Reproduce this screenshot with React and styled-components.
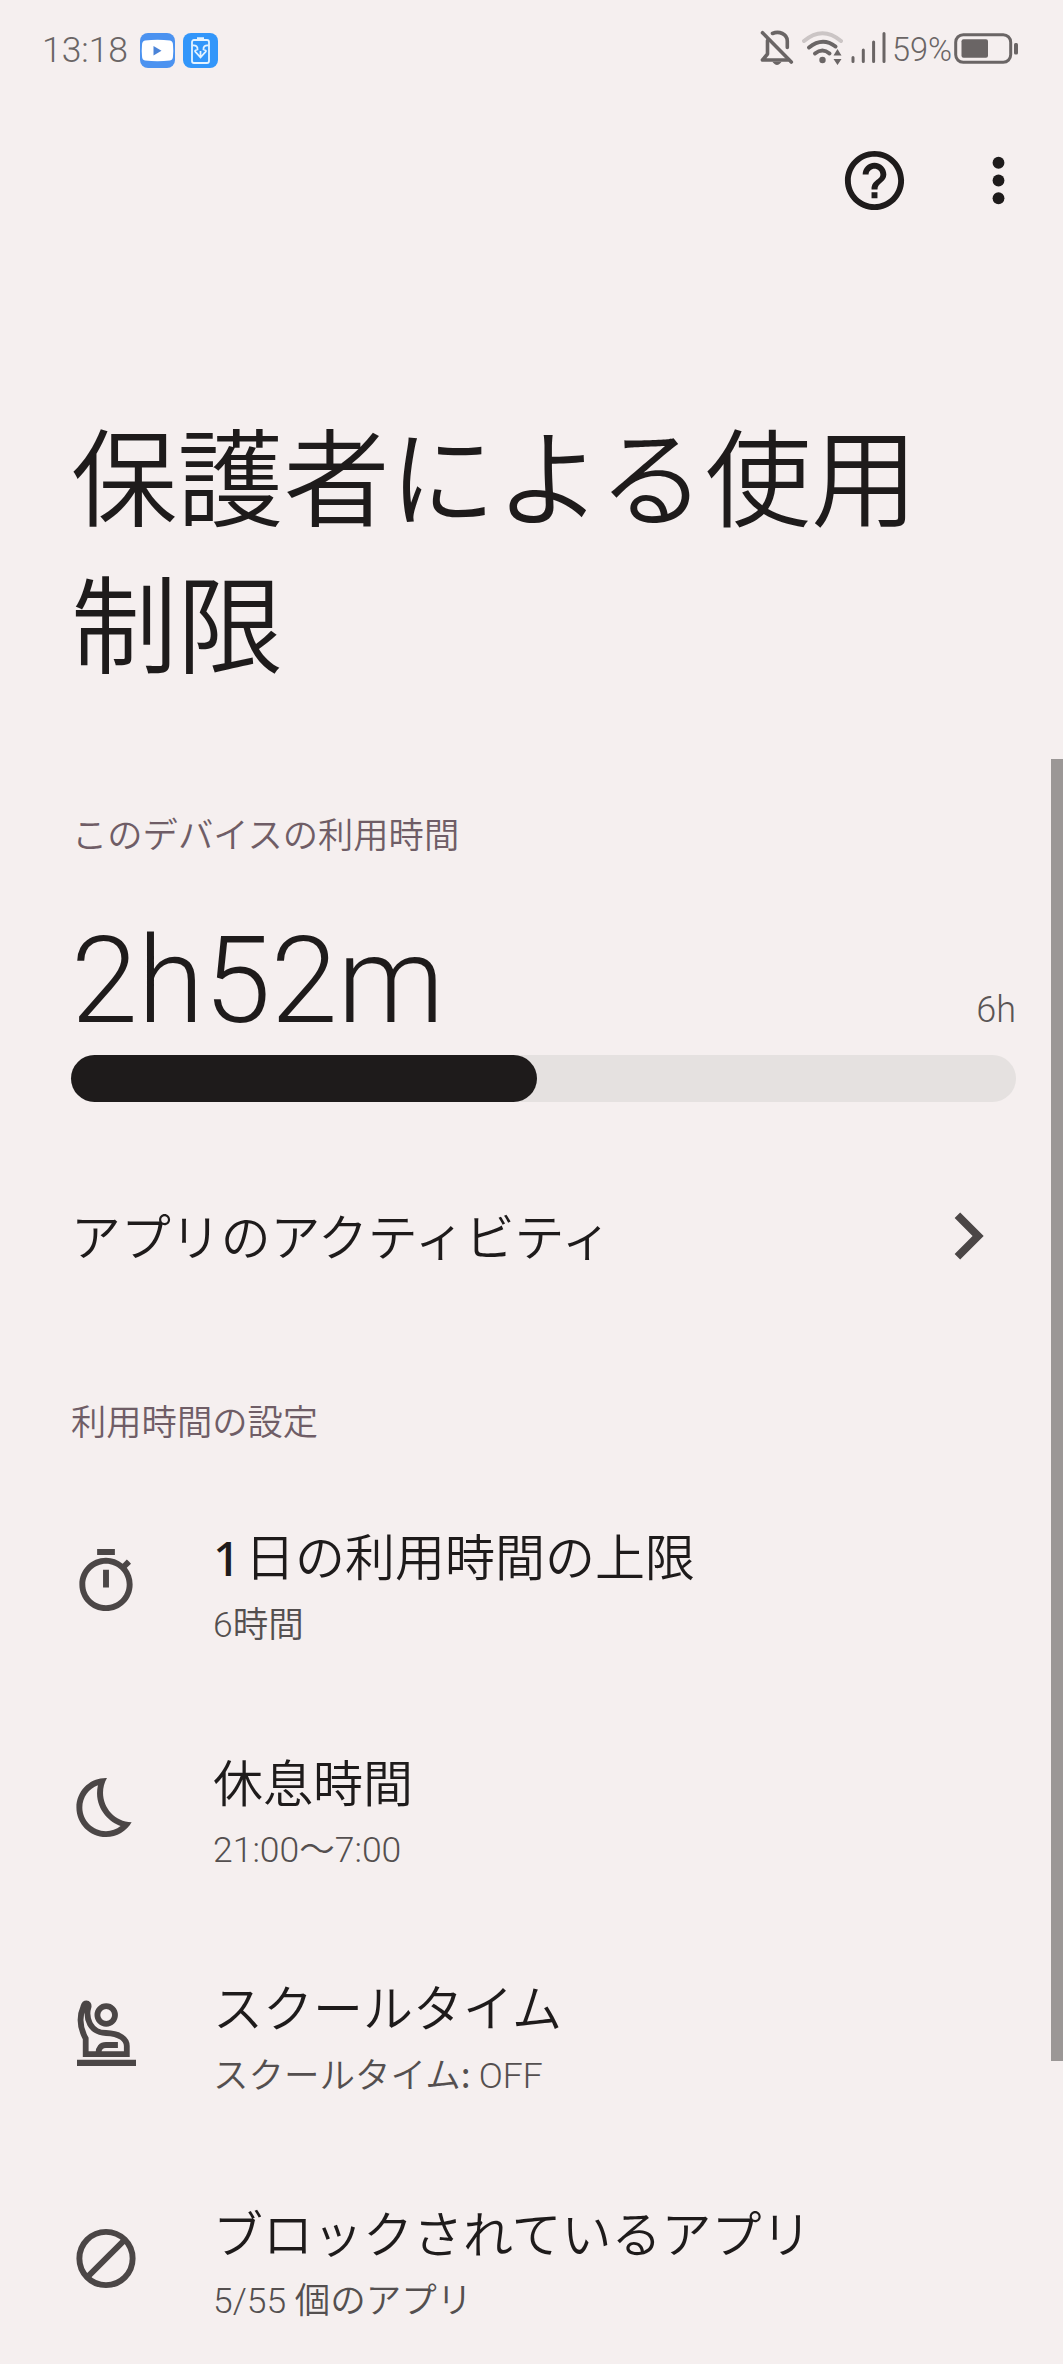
import React from "react";
import styled, { createGlobalStyle } from "styled-components";

const GlobalStyle = createGlobalStyle`
  * { box-sizing: border-box; }
  body { margin: 0; background: #f5efef; }
`;

const Screen = styled.main`
  position: relative;
  width: 1063px;
  height: 2364px;
  overflow: hidden;
  background: #f5efef;
  color: #1e1b1b;
  font-family: Roboto, "Noto Sans CJK JP", sans-serif;
  font-weight: 300;
  svg { display: block; flex: none; }
`;

const StatusBar = styled.header`
  display: flex;
  justify-content: space-between;
  align-items: center;
  height: 100px;
  padding: 0 44px 0 42px;
  color: #6a6565;
`;

const StatusGroup = styled.div`
  display: flex;
  align-items: center;
`;

const StatusText = styled.span`
  font-size: ${(p) => p.$size}px;
  line-height: 40px;
  white-space: nowrap;
`;

const AppBadges = styled.div`
  display: flex;
  gap: 8px;
  margin-left: 12px;
`;

const StatusIcons = styled.div`
  display: flex;
  align-items: center;
  margin: 0 ${(p) => p.$right}px 4px ${(p) => p.$left}px;
  gap: 8px;
`;

const Toolbar = styled.nav`
  display: flex;
  justify-content: flex-end;
  align-items: center;
  gap: 53px;
  height: 160px;
  padding-right: 29px;
`;

const Title = styled.h1`
  margin: 148px 0 0;
  padding: 0 110px 0 71px;
  font-size: 106.2px;
  line-height: 147px;
  font-weight: 350;
`;

const SectionLabel = styled.h2`
  margin: ${(p) => p.$top}px 0 0;
  padding-left: ${(p) => p.$left}px;
  font-size: 35.3px;
  line-height: 52px;
  font-weight: 350;
  color: #6f5d66;
`;

const Usage = styled.section`
  padding: 58px 47px 0 71px;
`;

const UsageFigures = styled.div`
  display: flex;
  justify-content: space-between;
  align-items: baseline;
  height: 122px;
  line-height: 122px;
`;

const UsedTime = styled.span`
  font-size: 120.4px;
`;

const LimitTime = styled.span`
  font-size: 36px;
  color: #5a5555;
`;

const Track = styled.div`
  height: 47px;
  margin-top: 13px;
  border-radius: 24px;
  background: #e5e1e0;
`;

const Fill = styled.div`
  height: 100%;
  width: ${(p) => p.$percent}%;
  border-radius: 24px;
  background: #1e1b1b;
`;

const LinkRow = styled.div`
  display: flex;
  align-items: center;
  justify-content: space-between;
  height: 94px;
  margin-top: 87px;
  padding: 0 48px 0 71px;
`;

const LinkLabel = styled.span`
  margin-top: 5px;
  font-size: 49.9px;
  font-weight: 350;
  line-height: 72px;
`;

const SettingsList = styled.ul`
  list-style: none;
  margin: 20px 0 0;
  padding: 0 0 0 70px;
`;

const SettingRow = styled.li`
  display: flex;
  align-items: center;
  gap: 71px;
  height: 225.6px;
`;

const SettingText = styled.div`
  padding-top: 10px;
`;

const SettingTitle = styled.div`
  font-size: 50px;
  font-weight: 350;
  line-height: 72px;
`;

const SettingDetail = styled.div`
  margin-top: 3.5px;
  font-size: 35.5px;
  font-weight: 350;
  line-height: 52px;
  color: #544f4f;
`;

const Latin = styled.span`
  font-weight: 300;
`;

const LeadDigit = styled.span`
  font-family: "Noto Sans", sans-serif;
  font-size: 48px;
  font-weight: 500;
  line-height: 1;
  word-spacing: -8px;
`;

const Colon = styled.span`
  font-family: "Noto Sans CJK JP", sans-serif;
  font-weight: 400;
  line-height: 1;
`;

const Scrollbar = styled.div`
  position: absolute;
  top: 759px;
  right: 0;
  width: 12px;
  height: 1302px;
  background: #9b9796;
`;

const VideoBadge = () => (
  <svg width="35" height="35" viewBox="0 0 35 35">
    <rect width="35" height="35" rx="8" fill="#4b92f0" />
    <path d="M5 7.500Q17.500 6 30 7.500Q33 8 33 12Q33.500 17.500 33 23Q33 27 30 27.500Q17.500 29 5 27.500Q2 27 2 23Q1.500 17.500 2 12Q2 8 5 7.500Z" fill="#fff" />
    <path d="M13.500 13v9.500l8-4.700z" fill="#4b84d8" />
  </svg>
);

const BatteryBadge = () => (
  <svg width="35" height="35" viewBox="0 0 35 35" fill="none" stroke="#e4f3ff" strokeWidth="1.800">
    <rect width="35" height="35" rx="8" fill="#3296fa" stroke="none" />
    <rect x="9" y="7" width="17" height="23" rx="2" />
    <path d="M14 5.500h7" strokeWidth="2.500" />
    <path d="M9.500 12.500q5.500-.5 5 4q-4 1-1.500 3l4.500 5l4.500-5q2.500-2-1.500-3q-.5-4.500 5-4M17.500 18v6" />
  </svg>
);

const BellOff = () => (
  <svg width="34" height="36" viewBox="0 0 34 36" fill="none" stroke="#6a6565" strokeWidth="3.600" strokeLinecap="round">
    <path d="M2.500 2.700L31.300 32" />
    <path d="M12.500 3.500C19 .5 27.300 4 27.300 11v6.500" />
    <path d="M7.500 10.500V24l-5 6H28" strokeLinejoin="round" />
    <path d="M14 32.500h6q-3 3.500-6 0z" fill="#6a6565" strokeWidth="1.500" />
  </svg>
);

const Wifi = () => (
  <svg width="41" height="36" viewBox="0 0 41 36" fill="none" stroke="#6a6565" strokeWidth="4" strokeLinecap="round">
    <path d="M2 11Q20.500 -4.500 39 11" stroke="#cbc5c5" />
    <path d="M7 17.500Q20.500 6.500 33.500 16.500" />
    <path d="M13 23.500Q20.500 17.500 27.500 23.500" />
    <circle cx="20.500" cy="30" r="3.200" fill="#6a6565" stroke="none" />
    <path d="M31.500 25.500l4-6.500 4 6.500zM31.500 29l4 6 4-6z" fill="#6a6565" stroke="none" />
  </svg>
);

const Signal = () => (
  <svg width="35" height="32" viewBox="0 0 35 32" stroke="#6a6565" strokeWidth="3" strokeLinecap="round">
    <path d="M2 25.500v4M12.300 18V29.500M22.600 10V29.500M33 1.500V29.500" />
  </svg>
);

const Battery = () => (
  <svg width="65" height="31" viewBox="0 0 65 31">
    <rect x="1.700" y="1.700" width="55" height="27.600" rx="7.500" fill="none" stroke="#6a6565" strokeWidth="3" />
    <rect x="7.500" y="6.200" width="26.500" height="18.600" rx="2" fill="#6a6565" />
    <rect x="60" y="10" width="4" height="11.500" rx="1.500" fill="#6a6565" />
  </svg>
);

const Help = () => (
  <svg width="71" height="71" viewBox="0 0 24 24" fill="#1e1b1b">
    <path d="M11 18h2v-2h-2v2zm1-16C6.480 2 2 6.480 2 12s4.480 10 10 10 10-4.480 10-10S17.520 2 12 2zm0 18c-4.410 0-8-3.590-8-8s3.590-8 8-8 8 3.590 8 8-3.590 8-8 8zm0-14c-2.210 0-4 1.790-4 4h2c0-1.100.9-2 2-2s2 .9 2 2c0 2-3 1.750-3 5h2c0-2.250 3-2.500 3-5 0-2.210-1.790-4-4-4z" />
  </svg>
);

const More = () => (
  <svg width="71" height="71" viewBox="0 0 24 24" fill="#1e1b1b">
    <circle cx="12" cy="6" r="2" />
    <circle cx="12" cy="12" r="2" />
    <circle cx="12" cy="18" r="2" />
  </svg>
);

const Chevron = () => (
  <svg width="94" height="94" viewBox="0 0 24 24" fill="#4b4646">
    <path d="M8.590 16.590L13.170 12 8.590 7.410 10 6l6 6-6 6z" />
  </svg>
);

const Timer = () => (
  <svg width="72" height="71" viewBox="0 0 24 24" fill="#4b4646">
    <path d="M15 1H9v2h6V1zm-4 13h2V8h-2v6zm8.030-6.610l1.420-1.420c-.43-.51-.9-.99-1.410-1.410l-1.420 1.420C16.070 4.740 14.120 4 12 4c-4.970 0-9 4.030-9 9s4.020 9 9 9 9-4.030 9-9c0-2.120-.74-4.070-1.970-5.610zM12 20c-3.870 0-7-3.130-7-7s3.130-7 7-7 7 3.130 7 7-3.130 7-7 7z" />
  </svg>
);

const Moon = () => (
  <svg width="72" height="71" viewBox="0 0 24 24" fill="#4b4646">
    <path d="M9.270 4.490c-1.630 7.540 3.750 12.410 7.660 13.800C15.540 19.380 13.810 20 12 20c-4.410 0-8-3.590-8-8 0-3.450 2.200-6.400 5.270-7.510M11.990 2.010C6.400 2.010 2 6.540 2 12c0 5.520 4.480 10 10 10 3.710 0 6.930-2.020 8.660-5.020-7.510-.25-12.090-8.430-8.320-14.970h-.35z" />
  </svg>
);

const School = () => (
  <svg width="72" height="72" viewBox="0 0 72 72" fill="none" stroke="#4b4646" strokeWidth="5.800">
    <circle cx="36.200" cy="18" r="8.800" />
    <path d="M15.700 57.200V41.500C11 33 8 22 13.500 9.500C14.500 5.500 19 5.500 18.600 9.500C16.500 16 17.500 22 20 27C24 34 29 35.700 36 36C50 36.500 56.800 42 56.800 49V57.200Z" />
    <path d="M28.500 56C28.500 51 31 48 36 48H47.900" />
    <path d="M7 65.800H66" strokeWidth="6.200" />
  </svg>
);

const Block = () => (
  <svg width="72" height="71" viewBox="0 0 24 24" fill="none" stroke="#4b4646" strokeWidth="2">
    <circle cx="12" cy="12" r="9" />
    <path d="M5.700 18.300L18.300 5.700" />
  </svg>
);

const settings = [
  { icon: <Timer />, title: <><LeadDigit>1 </LeadDigit>日の利用時間の上限</>, detail: <><Latin>6</Latin>時間</> },
  { icon: <Moon />, title: "休息時間", detail: <><Latin>21:00</Latin>〜<Latin>7:00</Latin></> },
  { icon: <School />, title: "スクールタイム", detail: <>スクールタイム<Colon>: </Colon><Latin>OFF</Latin></> },
  { icon: <Block />, title: "ブロックされているアプリ", detail: <><Latin>5/55 </Latin>個のアプリ</> },
];

export default function App() {
  return (
    <Screen lang="ja">
      <GlobalStyle />
      <StatusBar>
        <StatusGroup>
          <StatusText $size={35.4}>13:18</StatusText>
          <AppBadges>
            <VideoBadge />
            <BatteryBadge />
          </AppBadges>
        </StatusGroup>
        <StatusGroup>
          <StatusIcons $left={0} $right={6}>
            <BellOff />
            <Wifi />
            <Signal />
          </StatusIcons>
          <StatusText $size={32.5}>59%</StatusText>
          <StatusIcons $left={2} $right={0}>
            <Battery />
          </StatusIcons>
        </StatusGroup>
      </StatusBar>
      <Toolbar>
        <Help />
        <More />
      </Toolbar>
      <Title>保護者による使用制限</Title>
      <SectionLabel $top={108} $left={72}>このデバイスの利用時間</SectionLabel>
      <Usage>
        <UsageFigures>
          <UsedTime>2h52m</UsedTime>
          <LimitTime>6h</LimitTime>
        </UsageFigures>
        <Track>
          <Fill $percent={49.3} />
        </Track>
      </Usage>
      <LinkRow>
        <LinkLabel>アプリのアクティビティ</LinkLabel>
        <Chevron />
      </LinkRow>
      <SectionLabel $top={114} $left={71}>利用時間の設定</SectionLabel>
      <SettingsList>
        {settings.map((item, i) => (
          <SettingRow key={i}>
            {item.icon}
            <SettingText>
              <SettingTitle>{item.title}</SettingTitle>
              <SettingDetail>{item.detail}</SettingDetail>
            </SettingText>
          </SettingRow>
        ))}
      </SettingsList>
      <Scrollbar />
    </Screen>
  );
}
